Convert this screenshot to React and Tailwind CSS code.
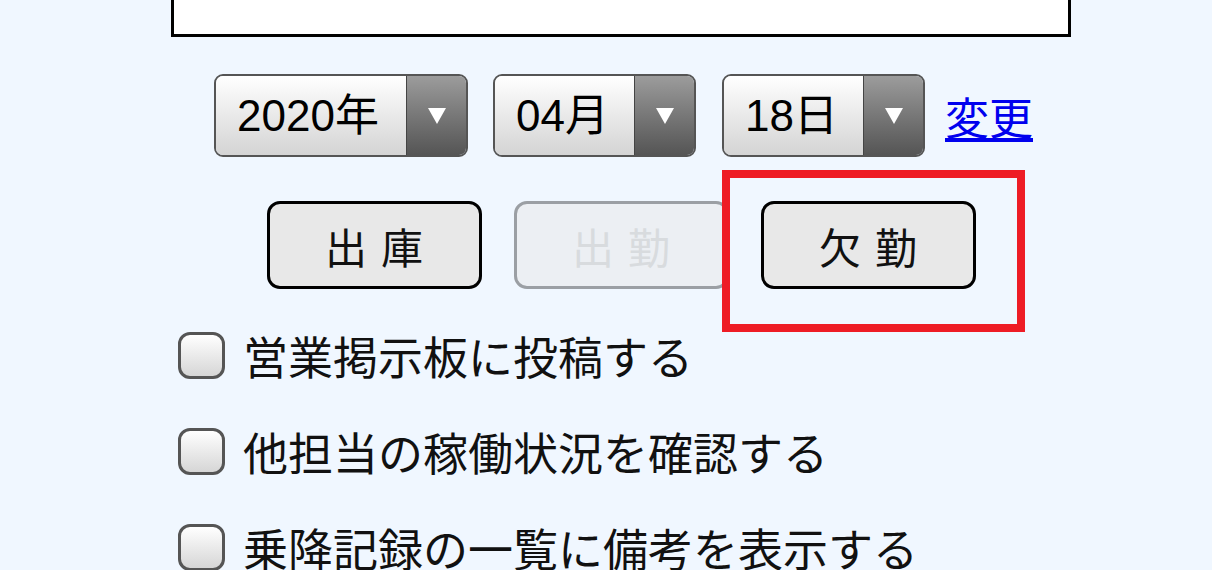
import React from 'react';

const SANS = "font-['Liberation_Sans','Noto_Sans_CJK_JP',sans-serif]";
const JP = "font-['Noto_Sans_CJK_JP',sans-serif]";

function Select({ label, width }) {
  return (
    <div
      className={`flex h-[83px] overflow-hidden rounded-[9px] border-[2px] border-[#555] ${width}`}
    >
      <div className={`flex flex-1 items-center pl-[21px] bg-gradient-to-b from-white to-[#d4d4d4] text-[44px] text-black ${SANS}`}>
        {label}
      </div>
      <div className="flex w-[60px] items-center justify-center border-l border-[#444] bg-gradient-to-b from-[#9c9c9c] to-[#555]">
        <svg width="20" height="18" viewBox="0 0 20 18">
          <path d="M1 1 L19 1 L10 17 Z" fill="#fff" />
        </svg>
      </div>
    </div>
  );
}

function ActionButton({ label, disabled }) {
  return (
    <button
      type="button"
      disabled={disabled}
      className={`flex h-[88px] w-[215px] items-center justify-center rounded-[13px] text-[42px] tracking-[14px] pl-[14px] ${JP} ${
        disabled
          ? 'border-[3px] border-[#9b9fa4] bg-[#eceff3] text-[#d8dbde]'
          : 'border-[3px] border-black bg-[#e8e8e8] text-[#111]'
      }`}
    >
      {label}
    </button>
  );
}

function CheckRow({ label }) {
  return (
    <label className="flex h-[47px] items-center gap-[18px]">
      <span className="h-[47px] w-[47px] shrink-0 rounded-[12px] border-[3px] border-[#555] bg-gradient-to-b from-white to-[#d6d6d6]" />
      <span className={`text-[45px] leading-none text-[#111] ${JP}`}>{label}</span>
    </label>
  );
}

export default function App() {
  return (
    <div className="relative h-[570px] w-[1212px] overflow-hidden bg-[#f0f7ff]">
      <div className="ml-[171px] w-[900px]">
        <div className="h-[37px] border-x-[3px] border-b-[3px] border-black bg-white" />

        <div className="mt-[37px] flex items-center justify-center pl-[5px]">
          <Select label="2020年" width="w-[254px]" />
          <div className="w-[25px]" />
          <Select label="04月" width="w-[203px]" />
          <div className="w-[26px]" />
          <Select label="18日" width="w-[203px]" />
          <a
            href="#"
            className={`ml-[20px] text-[44px] leading-none text-[#0000ee] underline ${JP}`}
          >
            変更
          </a>
        </div>

        <div className="mt-[44px] flex justify-center gap-[32px]">
          <ActionButton label="出庫" />
          <ActionButton label="出勤" disabled />
          <ActionButton label="欠勤" />
        </div>

        <div className="mt-[43px] flex flex-col gap-[49px] pl-[7px]">
          <CheckRow label="営業掲示板に投稿する" />
          <CheckRow label="他担当の稼働状況を確認する" />
          <CheckRow label="乗降記録の一覧に備考を表示する" />
        </div>
      </div>

      <div className="absolute left-[722px] top-[170px] h-[162px] w-[303px] border-[8px] border-[#ee1c25]" />
    </div>
  );
}
